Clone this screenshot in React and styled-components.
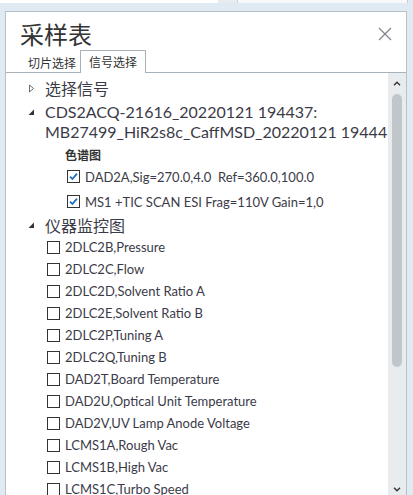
import React from "react";
import styled, { createGlobalStyle } from "styled-components";

const GlobalStyle = createGlobalStyle`
  html, body {
    margin: 0;
    padding: 0;
    background: #dfeaf3;
  }
  body {
    font-family: Lato, "Noto Sans CJK SC", sans-serif;
    color: #3b3b48;
  }
`;

const Page = styled.div`
  width: 413px;
  height: 495px;
  overflow: hidden;
  display: flex;
  flex-direction: column;
`;

// strip of the window behind the dialog
const BackStrip = styled.div`
  display: flex;
  height: 3px;
  width: 408px;
`;

const BackSeg = styled.div`
  width: ${(p) => (p.$w ? `${p.$w}px` : "auto")};
  flex: ${(p) => (p.$w ? "none" : 1)};
  background: ${(p) => p.$bg};
  border-right: ${(p) => (p.$line ? `1px solid ${p.$line}` : "none")};
`;

const Dialog = styled.div`
  margin: 8px 0 0 5px;
  width: 400px;
  flex: 1;
  min-height: 0;
  background: #fff;
  border: 1px solid #b8c1c9;
  border-bottom: none;
  display: flex;
  flex-direction: column;
`;

const Header = styled.div`
  height: 39px;
  display: flex;
  align-items: center;
  justify-content: space-between;
  padding: 0 14px 0 14px;
`;

const Title = styled.h1`
  margin: 0;
  font-family: "Noto Sans CJK SC", sans-serif;
  font-size: 24px;
  font-weight: 400;
  color: #333;
  line-height: 1;
  padding-top: 5px;
`;

const CloseButton = styled.button`
  border: none;
  background: transparent;
  padding: 0;
  width: 14px;
  height: 14px;
  margin-top: 4px;
  display: flex;
`;

const TabBar = styled.div`
  height: 21px;
  display: flex;
  align-items: flex-end;
  padding-left: 18px;
  border-bottom: 1px solid #a9b1b9;
`;

const Tab = styled.div`
  font-family: "Noto Sans CJK SC", sans-serif;
  font-size: 12px;
  color: #333;
  display: flex;
  align-items: center;
  box-sizing: border-box;
  ${(p) =>
    p.$active
      ? `
    height: 23px;
    padding: 0 8px;
    margin-bottom: -1px;
    background: #fff;
    border: 1px solid #a9b1b9;
    border-bottom: none;
    padding-bottom: 1px;
  `
      : `
    height: 20px;
    padding: 0 4px;
    padding-top: 1px;
  `}
`;

const Body = styled.div`
  flex: 1;
  min-height: 0;
  display: flex;
`;

const Tree = styled.div`
  flex: 1;
  min-width: 0;
  overflow: hidden;
  padding-top: 3px;
`;

const GroupRow = styled.div`
  display: flex;
  align-items: ${(p) => (p.$multi ? "flex-start" : "center")};
  height: ${(p) => (p.$multi ? "auto" : `${p.$h || 24}px`)};
  margin-top: ${(p) => p.$mt || 0}px;
  padding-left: 22px;
  font-size: 16px;
  white-space: nowrap;
`;

const Arrow = styled.span`
  width: 17px;
  flex: none;
  display: flex;
  align-items: center;
  height: ${(p) => (p.$multi ? "20px" : "auto")};
`;

const Lines = styled.div`
  line-height: 20px;
`;

const Caption = styled.div`
  height: 20px;
  margin-top: 2px;
  display: flex;
  align-items: center;
  padding-left: 59px;
  font-family: "Noto Sans CJK SC", sans-serif;
  font-size: 12px;
  font-weight: 700;
  color: #333;
`;

const CheckRow = styled.label`
  display: flex;
  align-items: center;
  height: ${(p) => p.$h || 22}px;
  padding-left: ${(p) => p.$indent}px;
  font-size: 13px;
  white-space: nowrap;
  gap: 5px;
`;

const Box = styled.span`
  width: 13px;
  height: 13px;
  box-sizing: border-box;
  border: 1px solid #333;
  background: #fff;
  flex: none;
  display: flex;
  align-items: center;
  justify-content: center;
`;

const ScrollBar = styled.div`
  width: 18px;
  flex: none;
  background: #e8ecef;
  display: flex;
  flex-direction: column;
  align-items: center;
`;

const ScrollArrow = styled.div`
  height: ${(p) => p.$h}px;
  display: flex;
  align-items: center;
  justify-content: center;
`;

const Spacer = styled.div`
  flex: 1;
`;

const Thumb = styled.div`
  width: 10px;
  height: 273px;
  border-radius: 5px;
  background: #c1c6cb;
`;

const CollapsedIcon = () => (
  <svg width="7" height="9" viewBox="0 0 7 9">
    <path d="M1.5 1 L5.5 4.5 L1.5 8 Z" fill="none" stroke="#6a6a6a" strokeWidth="1" />
  </svg>
);

const ExpandedIcon = () => (
  <svg width="7" height="7" viewBox="0 0 7 7">
    <path d="M6 0.5 L6 6 L0.5 6 Z" fill="#333" />
  </svg>
);

const CheckMark = () => (
  <svg width="9" height="9" viewBox="0 0 9 9">
    <path d="M1 4.6 L3.4 7 L8 1.6" fill="none" stroke="#1e6fc4" strokeWidth="1.8" />
  </svg>
);

const Check = ({ checked, indent, h, children }) => (
  <CheckRow $indent={indent} $h={h}>
    <Box>{checked && <CheckMark />}</Box>
    <span>{children}</span>
  </CheckRow>
);

const monitors = [
  "2DLC2B,Pressure",
  "2DLC2C,Flow",
  "2DLC2D,Solvent Ratio A",
  "2DLC2E,Solvent Ratio B",
  "2DLC2P,Tuning A",
  "2DLC2Q,Tuning B",
  "DAD2T,Board Temperature",
  "DAD2U,Optical Unit Temperature",
  "DAD2V,UV Lamp Anode Voltage",
  "LCMS1A,Rough Vac",
  "LCMS1B,High Vac",
  "LCMS1C,Turbo Speed",
];

export default function App() {
  return (
    <Page>
      <GlobalStyle />
      <BackStrip>
        <BackSeg $w={218} $bg="#ffffff" />
        <BackSeg $w={19} $bg="#e9ecef" $line="#d0d6dc" />
        <BackSeg $bg="#f6f8f9" $line="#c4ccd3" />
      </BackStrip>
      <Dialog>
        <Header>
          <Title>采样表</Title>
          <CloseButton aria-label="close">
            <svg width="14" height="14" viewBox="0 0 14 14">
              <path d="M1 1 L13 13 M13 1 L1 13" stroke="#7d838b" strokeWidth="1.2" />
            </svg>
          </CloseButton>
        </Header>
        <TabBar>
          <Tab>切片选择</Tab>
          <Tab $active>信号选择</Tab>
        </TabBar>
        <Body>
          <Tree>
            <GroupRow $h={24}>
              <Arrow>
                <CollapsedIcon />
              </Arrow>
              <span>选择信号</span>
            </GroupRow>
            <GroupRow $multi $mt={2}>
              <Arrow $multi>
                <ExpandedIcon />
              </Arrow>
              <Lines>
                <div>CDS2ACQ-21616_20220121 194437:</div>
                <div>MB27499_HiR2s8c_CaffMSD_20220121 194448</div>
              </Lines>
            </GroupRow>
            <Caption>色谱图</Caption>
            <Check checked indent={61} h={25}>
              DAD2A,Sig=270.0,4.0&nbsp;&nbsp;Ref=360.0,100.0
            </Check>
            <Check checked indent={61} h={25}>
              MS1 +TIC SCAN ESI Frag=110V Gain=1,0
            </Check>
            <GroupRow $h={22}>
              <Arrow>
                <ExpandedIcon />
              </Arrow>
              <span>仪器监控图</span>
            </GroupRow>
            {monitors.map((m) => (
              <Check key={m} indent={41}>
                {m}
              </Check>
            ))}
          </Tree>
          <ScrollBar>
            <ScrollArrow $h={21}>
              <svg width="8" height="5" viewBox="0 0 8 5">
                <path d="M1 4.2 L4 1.2 L7 4.2" fill="none" stroke="#333" strokeWidth="1.4" />
              </svg>
            </ScrollArrow>
            <Thumb />
            <Spacer />
            <ScrollArrow $h={12}>
              <svg width="8" height="5" viewBox="0 0 8 5">
                <path d="M1 0.8 L4 3.8 L7 0.8" fill="none" stroke="#333" strokeWidth="1.4" />
              </svg>
            </ScrollArrow>
          </ScrollBar>
        </Body>
      </Dialog>
    </Page>
  );
}
